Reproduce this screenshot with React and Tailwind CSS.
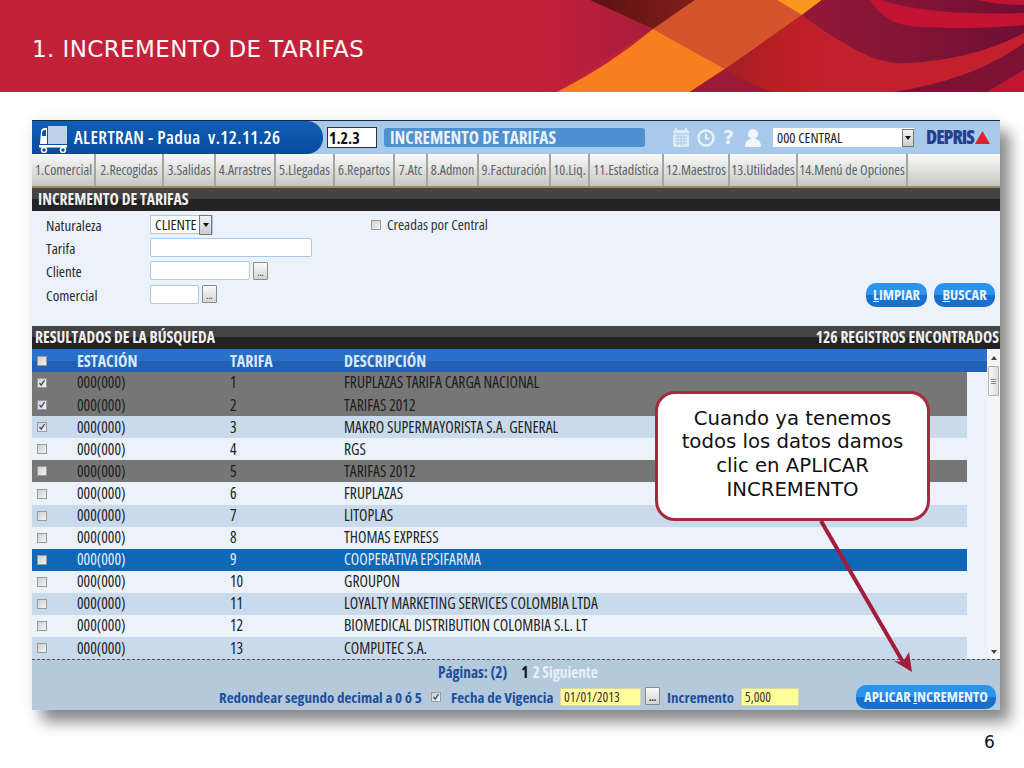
import React from "react";

const tabs = [
  ["1.Comercial", 63], ["2.Recogidas", 68], ["3.Salidas", 52], ["4.Arrastres", 60], ["5.Llegadas", 59], ["6.Repartos", 60],
  ["7.Atc", 33], ["8.Admon", 51], ["9.Facturación", 72], ["10.Liq.", 39], ["11.Estadística", 74], ["12.Maestros", 66], ["13.Utilidades", 68], ["14.Menú de Opciones", 110],
];
const rows = [
  ["1", "FRUPLAZAS TARIFA CARGA NACIONAL", "g", true],
  ["2", "TARIFAS 2012", "g", true],
  ["3", "MAKRO SUPERMAYORISTA S.A. GENERAL", "b", true],
  ["4", "RGS", "n", false],
  ["5", "TARIFAS 2012", "g", false],
  ["6", "FRUPLAZAS", "n", false],
  ["7", "LITOPLAS", "b", false],
  ["8", "THOMAS EXPRESS", "n", false],
  ["9", "COOPERATIVA EPSIFARMA", "s", false],
  ["10", "GROUPON", "n", false],
  ["11", "LOYALTY MARKETING SERVICES COLOMBIA LTDA", "b", false],
  ["12", "BIOMEDICAL DISTRIBUTION COLOMBIA S.L. LT", "n", false],
  ["13", "COMPUTEC S.A.", "b", false],
];
const rowBg = { g: "bg-[#767676] text-[#1c1c1c]", b: "bg-[#c9daec] text-[#222222]", n: "text-[#222222]", s: "bg-[#0f67b8] text-[#e6eef8]" };

function Check({ on }) {
  return (
    <span className="flex h-[10px] w-[10px] items-center justify-center border border-[#9a9a9a] bg-gradient-to-br from-[#d0d0d0] to-[#f4f4f4]">
      {on && (
        <svg width="8" height="8" viewBox="0 0 8 8">
          <path d="M1.5 4 L3.2 6.2 L6.5 1.2" fill="none" stroke="#33478f" strokeWidth="1.3" />
        </svg>
      )}
    </span>
  );
}
function Dots({ className = "" }) {
  return (
    <span className={`flex h-[18px] w-[15px] items-end justify-center rounded-[1px] border border-[#8a8a8a] bg-gradient-to-b from-[#fafafa] to-[#d4d4d4] pb-[3px] text-[10px] leading-[8px] text-[#222222] ${className}`}>...</span>
  );
}
function BlueBtn({ before = "", mark, rest, className = "" }) {
  return (
    <span className={`flex h-[24px] items-center justify-center whitespace-pre rounded-[10px] bg-gradient-to-b from-[#2a93ec] from-50% to-[#1a6fcb] to-50% text-[14.5px] font-bold text-[#eaf4ff] ${className}`}>
      {before}<span className="underline">{mark}</span>{rest}
    </span>
  );
}
function Label({ children }) {
  return <span className="w-[104px] text-[15px] leading-[18px] text-[#2a2a2a]">{children}</span>;
}
const field = "h-[19px] rounded-[2px] border border-[#a9c9ec] bg-white";
const plain = "font-['DejaVu_Sans',sans-serif] [font-stretch:100%]";

export default function App() {
  return (
    <div className="relative h-[768px] w-[1024px] overflow-hidden bg-white font-['Open_Sans',sans-serif] [font-stretch:75%]">
      {/* slide header */}
      <header className="relative flex h-[92px] items-center overflow-hidden bg-[#c3203a] pl-[32px] pt-[6px]">
        <svg className="absolute left-0 top-0" width="1024" height="92" viewBox="0 0 1024 92">
          <defs>
            <linearGradient id="r1" x1="720" x2="830" y1="0" y2="0" gradientUnits="userSpaceOnUse">
              <stop offset="0" stopColor="#a01f24" />
              <stop offset="0.6" stopColor="#bd1f24" />
              <stop offset="1" stopColor="#c3202d" />
            </linearGradient>
            <linearGradient id="l1" x1="540" x2="650" y1="0" y2="0" gradientUnits="userSpaceOnUse">
              <stop offset="0" stopColor="#c3203a" />
              <stop offset="1" stopColor="#a81d3a" />
            </linearGradient>
            <linearGradient id="br" x1="600" x2="690" y1="0" y2="0" gradientUnits="userSpaceOnUse">
              <stop offset="0" stopColor="#5f1313" />
              <stop offset="1" stopColor="#7f1d1a" />
            </linearGradient>
            <linearGradient id="m" x1="810" x2="1024" y1="0" y2="0" gradientUnits="userSpaceOnUse">
              <stop offset="0" stopColor="#931838" />
              <stop offset="1" stopColor="#6f0f33" />
            </linearGradient>
          </defs>
          <path d="M540 0 L590 0 L653 29 L557 92 L540 92 Z" fill="url(#l1)" />
          <path d="M590 0 L695 0 L653 29 Z" fill="url(#br)" />
          <path d="M695 0 L777 0 L802 15 L725 69 L653 29 Z" fill="#d4552b" />
          <path d="M777 0 L822 0 L802 15 Z" fill="#f7981f" />
          <path d="M653 29 L725 69 L690 92 L557 92 Q610 65 653 29 Z" fill="#f77f20" />
          <path d="M725 69 L690 92 L1024 92 L1024 0 L822 0 L802 15 Z" fill="url(#r1)" />
          <path d="M725 69 Q750 85 773 92 L690 92 Z" fill="#9c1a38" />
          <path d="M822 0 L802 15 Q838 43 873 58 Q890 64 907 63 Q973 60 1024 33 L1024 0 Z" fill="url(#m)" />
          <path d="M870 0 Q885 27 923 27 Q975 30 1024 25 L1024 13 Q930 16 880 0 Z" fill="#c21332" />
          <path d="M977 0 Q1000 5 1024 5 L1024 0 Z" fill="#c21332" />
          <path d="M893 92 Q973 80 1024 43 L1024 70 L987 92 Z" fill="#7c1133" />
          <path d="M987 92 L1024 70 L1024 92 Z" fill="#c2152f" />
        </svg>
        <h1 className={`relative z-10 whitespace-nowrap ${plain} text-[23px] font-normal tracking-[0.4px] text-[#f7f7f7]`}>1. INCREMENTO DE TARIFAS</h1>
      </header>

      {/* application picture */}
      <main className="relative ml-[32px] mt-[28px] h-[590px] w-[968px] bg-[#ebf2fa] shadow-[10px_12px_14px_rgba(0,0,0,0.45),0_0_14px_rgba(0,0,0,0.08)]">
        {/* top bar */}
        <div className="flex h-[34px] items-center border-t border-[#1a2a44] bg-[#a9c9ea]">
          <div className="flex h-[33px] w-[291px] shrink-0 items-center rounded-r-[16px] bg-gradient-to-b from-[#0f5fb5] to-[#0a4a9e] pl-[6px] text-white">
            <svg width="30" height="30" viewBox="0 0 30 30" className="shrink-0">
              <rect x="10" y="3" width="19" height="18" fill="#bcd2ea" />
              <path d="M3 9 Q3 5 7 5 L9 5 L9 21 L2 21 Z M4 9 L4 13 L8 13 L8 7 L6 7 Z" fill="#ffffff" fillRule="evenodd" />
              <rect x="1" y="22" width="28" height="2.5" fill="#ffffff" />
              <circle cx="6" cy="27" r="2.5" fill="none" stroke="#ffffff" strokeWidth="1.5" />
              <circle cx="25" cy="27" r="2.5" fill="none" stroke="#ffffff" strokeWidth="1.5" />
            </svg>
            <span className="ml-[6px] whitespace-pre text-[18px] font-semibold tracking-[0.4px]">ALERTRAN - Padua  v.12.11.26</span>
          </div>
          <span className="ml-[4px] flex h-[21px] w-[50px] shrink-0 items-center border border-[#333333] bg-white pl-[1px] text-[16px] font-bold leading-none text-[#111111]">1.2.3</span>
          <span className="ml-[7px] flex h-[19px] w-[261px] shrink-0 items-center rounded-[3px] bg-[#4f90d0] pl-[6px] text-[17.3px] font-bold text-[#e9f2fb]">INCREMENTO DE TARIFAS</span>
          <svg className="ml-[27px] shrink-0" width="18" height="22" viewBox="0 0 18 22">
            <rect x="1" y="3" width="16" height="17" rx="2" fill="#e1ebf5" />
            <path d="M1 7 H17" stroke="#a9c9ea" strokeWidth="1.2" />
            <path d="M4 1 V5 M14 1 V5" stroke="#e1ebf5" strokeWidth="2" />
            <path d="M3 10 H15 M3 13 H15 M3 16 H15 M6 8.5 V18.5 M9 8.5 V18.5 M12 8.5 V18.5" stroke="#a9c9ea" strokeWidth="0.9" />
          </svg>
          <svg className="ml-[6px] shrink-0" width="20" height="22" viewBox="0 0 20 22">
            <circle cx="10" cy="11" r="7.5" fill="none" stroke="#e9f1f9" strokeWidth="2.4" />
            <path d="M10 6.5 V11.5 H13" fill="none" stroke="#e9f1f9" strokeWidth="2" />
          </svg>
          <span className={`ml-[7px] w-[12px] shrink-0 ${plain} text-[19px] font-bold leading-none text-[#e9f1f9]`}>?</span>
          <svg className="ml-[9px] shrink-0" width="18" height="22" viewBox="0 0 18 22">
            <circle cx="9" cy="7" r="5" fill="#f2f6fb" />
            <path d="M1 20 Q1 13 6.5 12 L11.5 12 Q17 13 17 20 Z" fill="#f2f6fb" />
          </svg>
          <div className="ml-[11px] flex h-[19px] w-[141px] shrink-0 items-center justify-between bg-white pl-[4px] text-[14.5px] text-[#1c1c1c]">
            <span>000 CENTRAL</span>
            <span className="flex h-[18px] w-[12px] items-center justify-center border border-[#777777] bg-gradient-to-b from-[#f4f4f4] to-[#cccccc]">
              <span className="h-0 w-0 border-x-[3px] border-t-[4px] border-x-transparent border-t-[#111111]"></span>
            </span>
          </div>
          <span className="ml-[12px] flex shrink-0 items-center text-[19px] font-extrabold leading-none tracking-[-1px] text-[#24408f]">
            DEPRIS
            <svg className="ml-[1px]" width="15" height="15" viewBox="0 0 15 15"><path d="M7.5 1 L15 14 L0 14 Z" fill="#e02030" /></svg>
          </span>
        </div>

        {/* tabs */}
        <nav className="flex h-[32px] bg-gradient-to-b from-[#fafafa] to-[#c6c6c2] pl-[1px]">
          {tabs.map(([t, w]) => (
            <span key={t} style={{ width: w }} className="flex shrink-0 items-center justify-center whitespace-nowrap border-r-2 border-r-[#a5a5a0] pb-[2px] text-[14px] text-[#5a646c]">{t}</span>
          ))}
        </nav>
        <div className="h-[2px] bg-[#a08a5c]"></div>

        {/* section title */}
        <div className="flex h-[23px] items-center bg-gradient-to-b from-[#444444] from-50% to-[#222222] to-50% pl-[6px] text-[15.7px] font-bold text-[#f0f0f0]">INCREMENTO DE TARIFAS</div>

        {/* filter form */}
        <section className="relative flex h-[115px] justify-between pt-[2px] pl-[14px] pr-[5px]">
          <div className="flex flex-col">
            <div className="flex h-[23px] items-center">
              <Label>Naturaleza</Label>
              <span className="flex h-[19px] w-[63px] items-center justify-between border border-[#a9c9ec] bg-white pl-[4px] text-[15px] text-[#222222]">
                CLIENTE
                <span className="flex h-[20px] w-[13px] items-center justify-center border border-[#777777] bg-gradient-to-b from-[#f4f4f4] to-[#cccccc]">
                  <span className="h-0 w-0 border-x-[3px] border-t-[4px] border-x-transparent border-t-[#111111]"></span>
                </span>
              </span>
              <span className="ml-[158px] flex items-center whitespace-nowrap text-[14.8px] text-[#333333]">
                <Check />
                <span className="ml-[6px]">Creadas por Central</span>
              </span>
            </div>
            <div className="flex h-[23px] items-center"><Label>Tarifa</Label><span className={`${field} w-[162px]`}></span></div>
            <div className="flex h-[23px] items-center"><Label>Cliente</Label><span className={`${field} w-[100px]`}></span><Dots className="ml-[3px]" /></div>
            <div className="flex h-[25px] items-center"><Label>Comercial</Label><span className={`${field} w-[49px]`}></span><Dots className="ml-[3px] mb-[2px]" /></div>
          </div>
          <div className="flex items-start gap-[7px] pt-[70px]">
            <BlueBtn mark="L" rest="IMPIAR" className="w-[61px]" />
            <BlueBtn mark="B" rest="USCAR" className="w-[61px]" />
          </div>
        </section>

        {/* results */}
        <div className="flex h-[23px] items-center justify-between bg-gradient-to-b from-[#444444] from-50% to-[#222222] to-50% pl-[3px] pr-[1px] text-[15.6px] font-bold text-[#f0f0f0]">
          <span>RESULTADOS DE LA BÚSQUEDA</span>
          <span>126 REGISTROS ENCONTRADOS</span>
        </div>
        <div className="flex h-[310px] pr-0">
          <div className="w-[955px]">
            <div className="flex h-[23px] items-center bg-gradient-to-b from-[#2a6fc9] from-50% to-[#2260b4] to-50% text-[16px] font-bold text-[#d7e8fa]">
              <span className="flex w-[45px] pl-[5px]"><Check /></span>
              <span className="w-[153px]">ESTACIÓN</span>
              <span className="w-[114px]">TARIFA</span>
              <span>DESCRIPCIÓN</span>
            </div>
            {rows.map(([n, d, k, on]) => (
              <div key={n} className={`flex h-[22.1px] w-[935px] items-center text-[15.5px] ${rowBg[k]}`}>
                <span className="flex w-[45px] pl-[5px]"><Check on={on} /></span>
                <span className="w-[153px]">000(000)</span>
                <span className="w-[114px]">{n}</span>
                <span>{d}</span>
              </div>
            ))}
          </div>
          <div className="flex w-[13px] flex-col items-center bg-[#f3f5f8]">
            <span className="mt-[7px] h-0 w-0 border-x-[3px] border-b-[4px] border-x-transparent border-b-[#444444]"></span>
            <span className="mt-[6px] flex h-[30px] w-[11px] flex-col items-center justify-center gap-[1px] rounded-[1px] border border-[#b0b0b0] bg-gradient-to-r from-[#f8f8f8] to-[#dddddd]">
              <span className="h-px w-[5px] bg-[#888888]"></span>
              <span className="h-px w-[5px] bg-[#888888]"></span>
              <span className="h-px w-[5px] bg-[#888888]"></span>
            </span>
            <span className="mt-auto mb-[5px] h-0 w-0 border-x-[3px] border-t-[4px] border-x-transparent border-t-[#444444]"></span>
          </div>
        </div>

        {/* footer */}
        <footer className="relative h-[51px] whitespace-nowrap border-t border-dashed border-t-[#555555] bg-[#b4c9dc] font-bold text-[#1f4f9a]">
          <div className="flex h-[25px] items-center pl-[406px] text-[15.3px]">
            <span>Páginas: (2)</span>
            <span className="ml-[14px] text-[#111111]">1</span>
            <span className="ml-[4px] text-[#e6f0fa]">2 Siguiente</span>
          </div>
          <div className="flex h-[24px] items-center pl-[187px] text-[15px]">
            <span className="w-[204px] text-[15px]">Redondear segundo decimal a 0 ó 5</span>
            <span className="ml-[8px]"><Check on /></span>
            <span className="ml-[10px] w-[102px]">Fecha de Vigencia</span>
            <span className="ml-[7px] flex h-[18px] w-[81px] items-center border border-[#d8d8b0] bg-[#ffff99] pl-[3px] text-[13.5px] font-normal text-[#333333]">01/01/2013</span>
            <Dots className="ml-[4px] mb-[3px]" />
            <span className="ml-[7px] w-[67px]">Incremento</span>
            <span className="ml-[7px] flex h-[18px] w-[58px] items-center border border-[#d8d8b0] bg-[#ffff99] pl-[3px] text-[13.5px] font-normal text-[#333333]">5,000</span>
            <BlueBtn before="APLICAR " mark="I" rest="NCREMENTO" className="ml-[57px] w-[140px]" />
          </div>
        </footer>
      </main>

      {/* callout */}
      <div className={`absolute left-[655px] top-[391px] flex h-[130px] w-[275px] items-center justify-center rounded-[20px] border-[3px] border-[#a52a3c] bg-white px-[4px] pb-[4px] text-center ${plain} text-[19.7px] leading-[23.7px] text-[#111111]`}>
        <span>Cuando ya tenemos<br />todos los datos damos<br />clic en APLICAR<br />INCREMENTO</span>
      </div>
      <svg className="absolute left-[810px] top-[515px]" width="110" height="165" viewBox="0 0 110 165">
        <path d="M11 6 L93 147" stroke="#a51c3a" strokeWidth="4" fill="none" />
        <path d="M102 157 L84 146 L93 147 L99 137 Z" fill="#a51c3a" />
      </svg>

      <div className={`absolute left-[984px] top-[732px] ${plain} text-[17px] leading-[20px] text-[#111111]`}>6</div>
    </div>
  );
}
